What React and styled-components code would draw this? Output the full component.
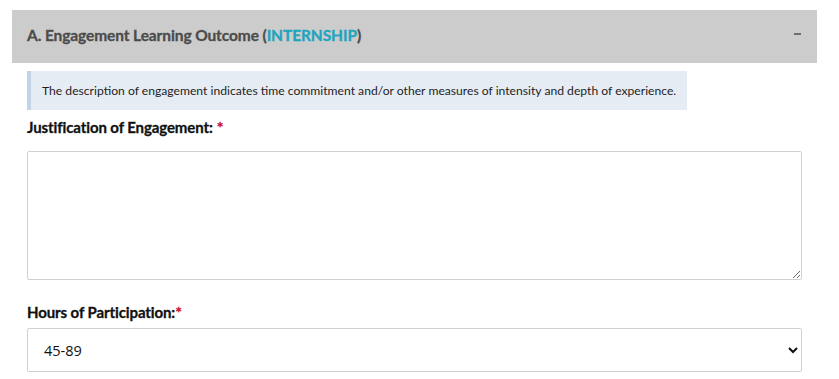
import React from "react";
import styled, { createGlobalStyle } from "styled-components";

const Global = createGlobalStyle`
  html, body { margin: 0; padding: 0; background: #fff; }
  body { font-family: Lato, "Open Sans", sans-serif; color: #111; }
  * { box-sizing: border-box; }
`;

const Page = styled.div`
  padding: 10px 22px 0 12px;
`;

const Header = styled.div`
  height: 53px;
  background: #cccccc;
  display: flex;
  align-items: center;
  justify-content: space-between;
  padding: 0 16px 3px 15px;
`;

const Title = styled.h2`
  margin: 0;
  font-size: 15.5px;
  font-weight: 700;
  color: #4b4b4b;
  letter-spacing: -0.1px;
  -webkit-text-stroke: 0.3px currentColor;
`;

const Accent = styled.span`
  color: #1fa4bf;
`;

const Toggle = styled.span`
  width: 7px;
  height: 1.5px;
  background: #6f6f6f;
  margin-bottom: 2px;
`;

const Body = styled.div`
  padding: 8px 15px 0 15px;
`;

const Notice = styled.div`
  display: inline-block;
  background: #e6ecf4;
  border-left: 4px solid #c3d4e8;
  padding: 11px 11px 11px 11px;
  font-size: 12.15px;
  color: #1e1e1e;
  line-height: 17px;
`;

const Field = styled.div`
  display: flex;
  flex-direction: column;
  margin-top: ${(p) => p.$top}px;
`;

const Label = styled.label`
  font-size: 15px;
  font-weight: 700;
  color: #111;
  line-height: 18px;
  letter-spacing: -0.1px;
  -webkit-text-stroke: 0.3px currentColor;
  margin-bottom: ${(p) => p.$gap}px;
`;

const Req = styled.span`
  color: #c8102e;
  font-size: 16px;
  margin-left: ${(p) => p.$space}px;
`;

const TextArea = styled.textarea`
  width: 775px;
  height: 129px;
  border: 1px solid #cfd1d4;
  border-radius: 2px;
  font-family: inherit;
  font-size: 14px;
  padding: 8px 12px;
  resize: vertical;
  outline: none;
`;

const Select = styled.select`
  width: 775px;
  height: 44px;
  border: 1px solid #cfd1d4;
  border-radius: 2px;
  background: #fff;
  font-family: "Open Sans", Lato, sans-serif;
  font-size: 14.5px;
  color: #111;
  padding: 0 12px;
  outline: none;
`;

export default function App() {
  return (
    <>
      <Global />
      <Page>
        <Header>
          <Title>
            A. Engagement Learning Outcome (<Accent>INTERNSHIP</Accent>)
          </Title>
          <Toggle />
        </Header>
        <Body>
          <Notice>
            The description of engagement indicates time commitment and/or other measures of intensity and depth of experience.
          </Notice>
          <Field $top={8}>
            <Label $gap={15}>
              Justification of Engagement:<Req $space={4}>*</Req>
            </Label>
            <TextArea />
          </Field>
          <Field $top={23}>
            <Label $gap={7}>
              Hours of Participation:<Req $space={0}>*</Req>
            </Label>
            <Select defaultValue="45-89">
              <option>0-44</option>
              <option>45-89</option>
              <option>90+</option>
            </Select>
          </Field>
        </Body>
      </Page>
    </>
  );
}
